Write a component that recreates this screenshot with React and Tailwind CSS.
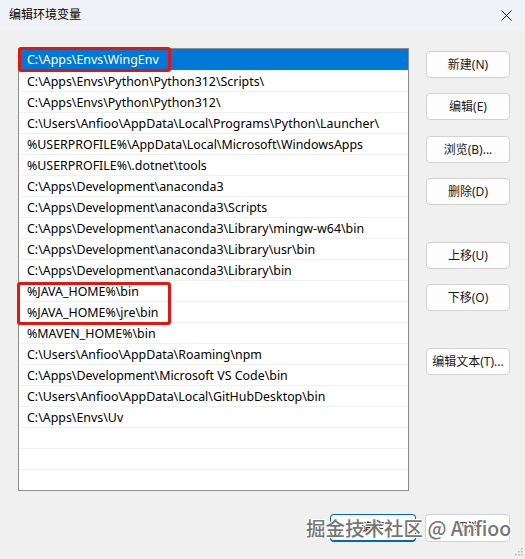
import React from "react";

const rows = [
  "C:\\Apps\\Envs\\WingEnv",
  "C:\\Apps\\Envs\\Python\\Python312\\Scripts\\",
  "C:\\Apps\\Envs\\Python\\Python312\\",
  "C:\\Users\\Anfioo\\AppData\\Local\\Programs\\Python\\Launcher\\",
  "%USERPROFILE%\\AppData\\Local\\Microsoft\\WindowsApps",
  "%USERPROFILE%\\.dotnet\\tools",
  "C:\\Apps\\Development\\anaconda3",
  "C:\\Apps\\Development\\anaconda3\\Scripts",
  "C:\\Apps\\Development\\anaconda3\\Library\\mingw-w64\\bin",
  "C:\\Apps\\Development\\anaconda3\\Library\\usr\\bin",
  "C:\\Apps\\Development\\anaconda3\\Library\\bin",
  "%JAVA_HOME%\\bin",
  "%JAVA_HOME%\\jre\\bin",
  "%MAVEN_HOME%\\bin",
  "C:\\Users\\Anfioo\\AppData\\Roaming\\npm",
  "C:\\Apps\\Development\\Microsoft VS Code\\bin",
  "C:\\Users\\Anfioo\\AppData\\Local\\GitHubDesktop\\bin",
  "C:\\Apps\\Envs\\Uv",
  "",
  "",
  "",
];

const font = "font-['Noto_Sans','Noto_Sans_CJK_SC',sans-serif]";

function Btn({ children, className = "" }) {
  return (
    <div
      className={`h-[27px] w-[84px] flex items-center justify-center rounded-[4px] border border-[#d3d3d3] bg-[#fdfdfd] text-[12px] text-[#1a1a1a] ${className}`}
    >
      {children}
    </div>
  );
}

export default function App() {
  return (
    <div className={`relative w-[525px] h-[559px] bg-[#f0f0f0] overflow-hidden ${font}`}>
      {/* title bar */}
      <div className="h-[30px] flex items-center justify-between bg-[#eff3f8] pl-[9px] pr-[12px]">
        <span className="text-[12px] text-black leading-none">编辑环境变量</span>
        <svg width="11" height="11" viewBox="0 0 11 11" className="mr-[1px]">
          <path d="M0.5 0.5 L10.5 10.5 M10.5 0.5 L0.5 10.5" stroke="#1a1a1a" strokeWidth="1" />
        </svg>
      </div>

      <div className="flex pt-[18px]">
        {/* list */}
        <div className="ml-[18px] w-[391px] h-[443px] border border-[#8c8c8c] bg-white overflow-hidden">
          {rows.map((r, i) => (
            <div
              key={i}
              className={`h-[21px] flex items-center pl-[8px] text-[12.4px] leading-none whitespace-nowrap ${
                i === 0
                  ? "bg-[#0078d7] text-white"
                  : "border-t border-[#f0f0f0] text-black"
              }`}
            >
              <span className="pt-[2px]">{r}</span>
            </div>
          ))}
        </div>

        {/* side buttons */}
        <div className="ml-[17px] flex flex-col">
          <Btn className="mt-[3px]">新建(N)</Btn>
          <Btn className="mt-[15px]">编辑(E)</Btn>
          <Btn className="mt-[16px]">浏览(B)...</Btn>
          <Btn className="mt-[15px]">删除(D)</Btn>
          <Btn className="mt-[37px]">上移(U)</Btn>
          <Btn className="mt-[15px]">下移(O)</Btn>
          <Btn className="mt-[37px]">编辑文本(T)...</Btn>
        </div>
      </div>

      {/* bottom buttons */}
      <div className="flex justify-end gap-[9px] pr-[15px] mt-[23px]">
        <div className="h-[28px] w-[86px] flex items-center justify-center rounded-[4px] border border-[#0067c0] border-b-2 bg-[#fdfdfd] text-[12px] text-black">
          确定
        </div>
        <Btn className="h-[28px] w-[85px]">取消</Btn>
      </div>

      {/* red annotation boxes */}
      <div className="absolute left-[18px] top-[47px] w-[153px] h-[25px] border-[3px] border-[#e8130d] rounded-[3px]" />
      <div className="absolute left-[17px] top-[282px] w-[154px] h-[43px] border-[3px] border-[#e8130d] rounded-[3px]" />

      {/* watermark */}
      <div className="absolute left-[306px] top-[518px] text-[19.5px] font-medium leading-none text-[#767676] whitespace-nowrap [text-shadow:0_0_1px_#fff,1px_1px_0_#fff,-1px_-1px_0_#fff,1px_-1px_0_#fff,-1px_1px_0_#fff] font-['Noto_Sans_CJK_SC','Noto_Sans',sans-serif]">
        掘金技术社区 @ Anfioo
      </div>

      {/* resize grip */}
      <svg width="8" height="8" viewBox="0 0 8 8" className="absolute right-[2px] bottom-[3px]">
        <rect x="6" y="0" width="1.5" height="1.5" fill="#b0b0b0" />
        <rect x="3" y="3" width="1.5" height="1.5" fill="#b0b0b0" />
        <rect x="6" y="3" width="1.5" height="1.5" fill="#b0b0b0" />
        <rect x="0" y="6" width="1.5" height="1.5" fill="#b0b0b0" />
        <rect x="3" y="6" width="1.5" height="1.5" fill="#b0b0b0" />
        <rect x="6" y="6" width="1.5" height="1.5" fill="#b0b0b0" />
      </svg>
    </div>
  );
}
